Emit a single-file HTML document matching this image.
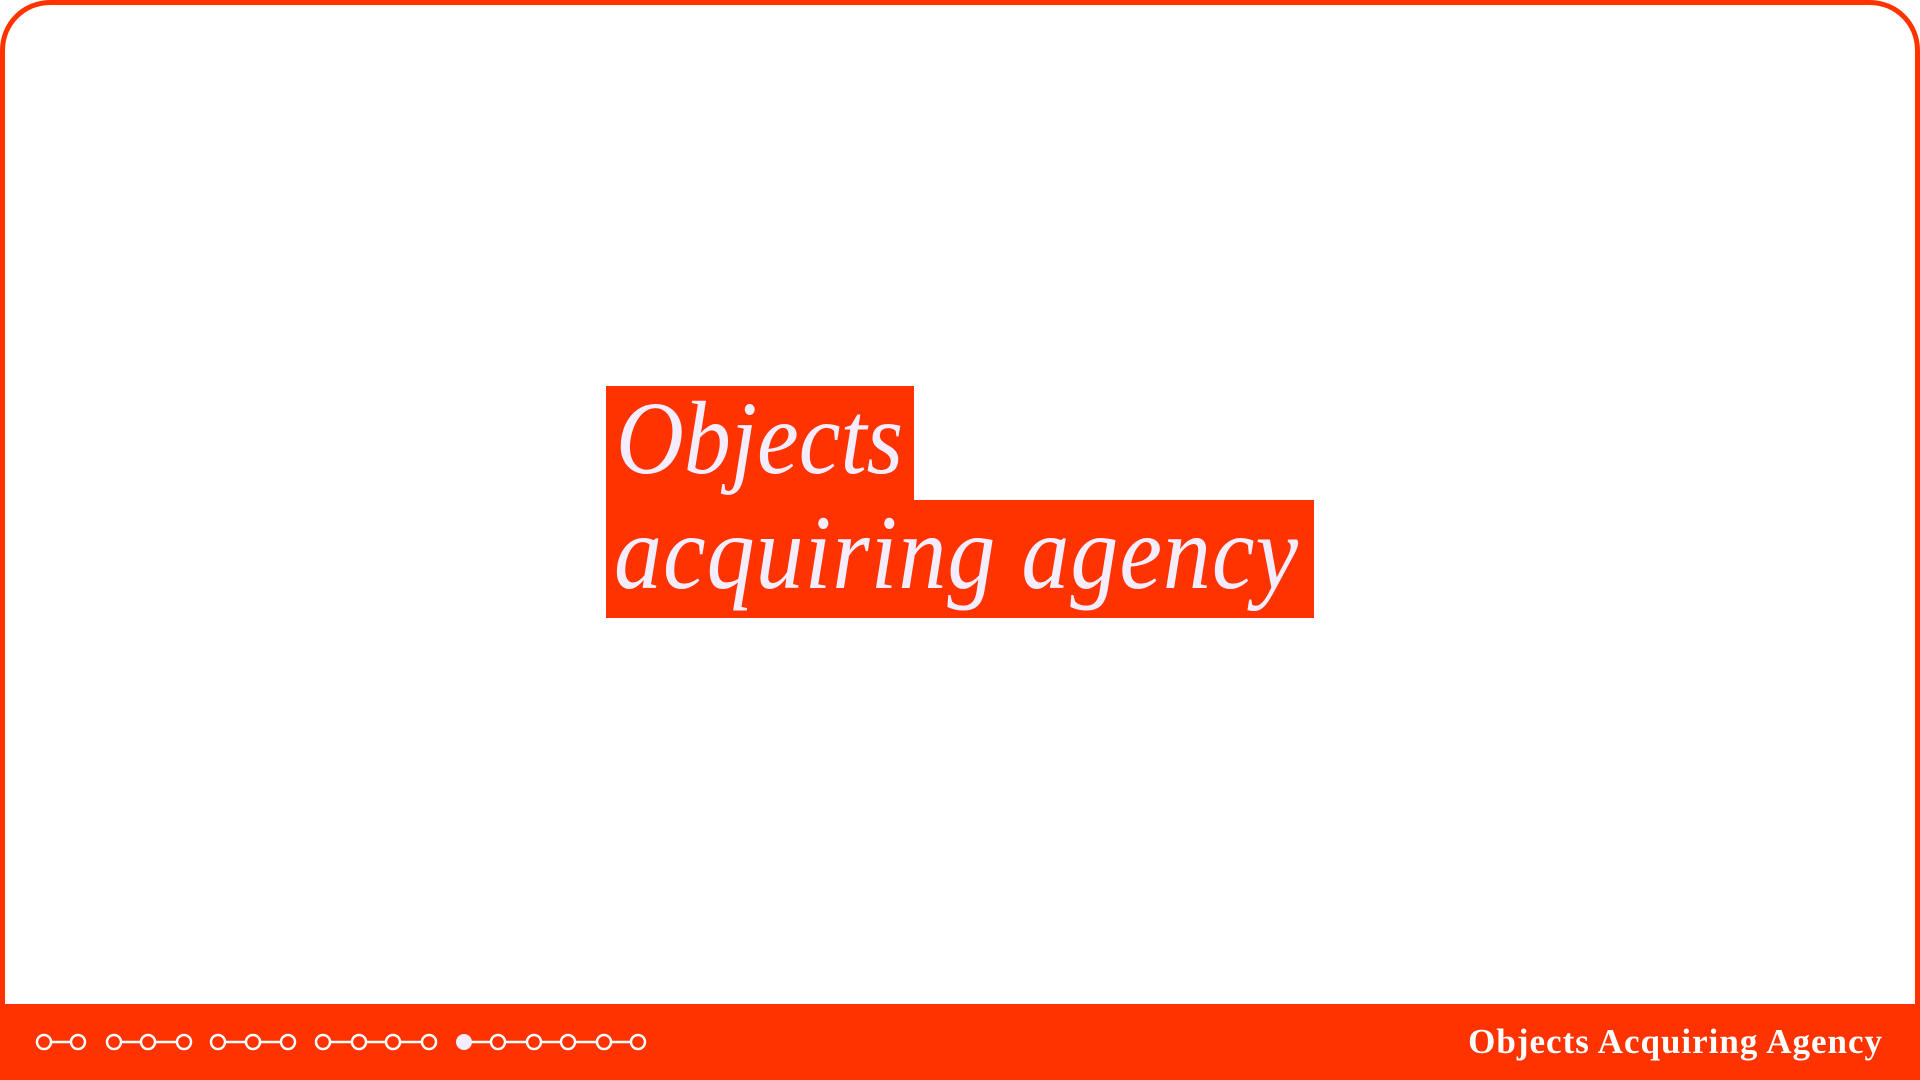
<!DOCTYPE html>
<html><head><meta charset="utf-8"><style>
html,body{margin:0;padding:0;width:1920px;height:1080px;overflow:hidden;background:#fff;}
.frame{position:absolute;left:0;top:0;width:1920px;height:1080px;box-sizing:border-box;border:5px solid #ff3300;border-bottom:none;border-radius:50px 50px 0 0;}
.bar{position:absolute;left:0;top:1004px;width:1920px;height:76px;background:#ff3300;}
.box{position:absolute;background:#ff3300;color:#f4ecff;font-family:"Liberation Serif",serif;font-style:italic;white-space:nowrap;}
.box span{display:inline-block;transform:scaleY(1.1);transform-origin:50% 60%;}
.b1{left:606px;top:386px;width:308px;height:114px;font-size:94px;line-height:108px;padding-left:10px;box-sizing:border-box;}
.b2{left:606px;top:500px;width:708px;height:118px;font-size:96px;line-height:108px;padding-left:8px;box-sizing:border-box;letter-spacing:1px;}
.foot{position:absolute;right:37px;top:1018px;font-family:"Liberation Serif",serif;font-size:35px;font-weight:bold;letter-spacing:1px;color:#fff;line-height:48px;}
svg{position:absolute;left:0;top:1004px;}
</style></head><body>
<div class="frame"></div>
<div class="box b1"><span>Objects</span></div>
<div class="box b2"><span>acquiring agency</span></div>
<div class="bar"></div>
<svg width="700" height="76" viewBox="0 0 700 76">
<g stroke="#fff" stroke-width="2.5" fill="none">
<line x1="44" y1="38" x2="78" y2="38"/>
<line x1="114" y1="38" x2="184" y2="38"/>
<line x1="218" y1="38" x2="288" y2="38"/>
<line x1="323" y1="38" x2="429" y2="38"/>
<line x1="464" y1="38" x2="638" y2="38"/>
<g fill="#ff3300">
<circle cx="44" cy="38" r="7"/><circle cx="78" cy="38" r="7"/>
<circle cx="114" cy="38" r="7"/><circle cx="148" cy="38" r="7"/><circle cx="184" cy="38" r="7"/>
<circle cx="218" cy="38" r="7"/><circle cx="253" cy="38" r="7"/><circle cx="288" cy="38" r="7"/>
<circle cx="323" cy="38" r="7"/><circle cx="359" cy="38" r="7"/><circle cx="393" cy="38" r="7"/><circle cx="429" cy="38" r="7"/>
<circle cx="498" cy="38" r="7"/><circle cx="534" cy="38" r="7"/><circle cx="568" cy="38" r="7"/><circle cx="604" cy="38" r="7"/><circle cx="638" cy="38" r="7"/>
</g>
<circle cx="464" cy="38" r="8" fill="#f4ecff" stroke="none"/>
</g>
</svg>
<div class="foot">Objects Acquiring Agency</div>
</body></html>
